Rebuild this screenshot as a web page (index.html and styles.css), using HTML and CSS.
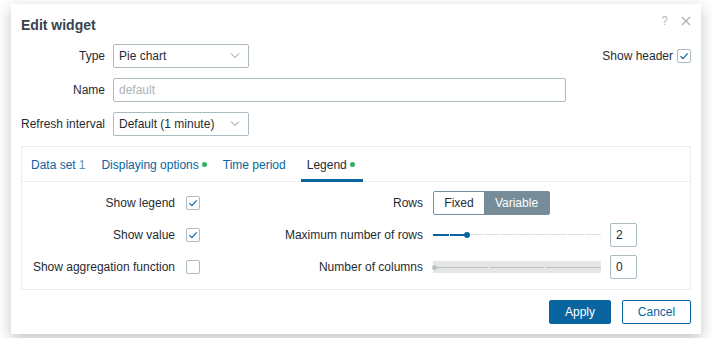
FILE: index.html
```html
<!DOCTYPE html>
<html lang="en">
<head>
    <meta charset="UTF-8">
    <title>Edit widget</title>
    <link rel="stylesheet" href="styles.css">
</head>
<body>
    <div class="dialog">
        <div class="dialog-header">
            <h4>Edit widget</h4>
            <div class="header-controls">
                <span class="btn-help">?</span>
                <span class="btn-close">
                    <svg width="10" height="10" viewBox="0 0 10 10"><path d="M1 1l8 8M9 1l-8 8" stroke="#a9b3b9" stroke-width="1.4" fill="none"/></svg>
                </span>
            </div>
        </div>

        <div class="widget-form">
            <label class="form-label">Type</label>
            <div class="form-field">
                <div class="select">
                    <span>Pie chart</span>
                    <svg width="10" height="6" viewBox="0 0 10 6"><path d="M1 0.5l4 4 4-4" stroke="#85939b" stroke-width="1" fill="none"/></svg>
                </div>
            </div>
            <div class="show-header">
                <span>Show header</span>
                <span class="checkbox">
                    <svg width="12" height="12" viewBox="0 0 12 12"><path d="M2.5 6.2l2.4 2.4 4.8-5.2" stroke="#0a64a0" stroke-width="1.2" fill="none"/></svg>
                </span>
            </div>

            <label class="form-label">Name</label>
            <div class="form-field">
                <input type="text" class="name-input" placeholder="default">
            </div>
            <div></div>

            <label class="form-label">Refresh interval</label>
            <div class="form-field">
                <div class="select">
                    <span>Default (1 minute)</span>
                    <svg width="10" height="6" viewBox="0 0 10 6"><path d="M1 0.5l4 4 4-4" stroke="#85939b" stroke-width="1" fill="none"/></svg>
                </div>
            </div>
            <div></div>
        </div>

        <div class="tabs">
            <ul class="tab-list">
                <li class="tab">Data set <span class="tab-count">1</span></li>
                <li class="tab">Displaying options<span class="dot"></span></li>
                <li class="tab">Time period</li>
                <li class="tab active">Legend<span class="dot"></span></li>
            </ul>
            <div class="tab-panel">
                <div class="legend-grid">
                    <label class="grid-label">Show legend</label>
                    <div class="grid-check"><span class="checkbox">
                        <svg width="12" height="12" viewBox="0 0 12 12"><path d="M2.5 6.2l2.4 2.4 4.8-5.2" stroke="#0a64a0" stroke-width="1.2" fill="none"/></svg>
                    </span></div>
                    <label class="grid-label right">Rows</label>
                    <div class="grid-control">
                        <div class="segmented">
                            <span class="seg">Fixed</span>
                            <span class="seg selected">Variable</span>
                        </div>
                    </div>

                    <label class="grid-label">Show value</label>
                    <div class="grid-check"><span class="checkbox">
                        <svg width="12" height="12" viewBox="0 0 12 12"><path d="M2.5 6.2l2.4 2.4 4.8-5.2" stroke="#0a64a0" stroke-width="1.2" fill="none"/></svg>
                    </span></div>
                    <label class="grid-label right">Maximum number of rows</label>
                    <div class="grid-control">
                        <div class="range">
                            <div class="range-track">
                                <span class="step filled"></span><span class="step filled"></span>
                                <span class="step"></span><span class="step"></span><span class="step"></span>
                                <span class="step"></span><span class="step"></span><span class="step"></span>
                                <span class="step"></span><span class="step"></span>
                            </div>
                            <span class="thumb" style="left: 34px"></span>
                        </div>
                        <input type="text" class="num-input" value="2">
                    </div>

                    <label class="grid-label">Show aggregation function</label>
                    <div class="grid-check"><span class="checkbox"></span></div>
                    <label class="grid-label right">Number of columns</label>
                    <div class="grid-control">
                        <div class="range disabled">
                            <div class="range-track">
                                <span class="step"></span><span class="step"></span><span class="step"></span>
                            </div>
                            <span class="thumb" style="left: 2px"></span>
                        </div>
                        <input type="text" class="num-input" value="0">
                    </div>
                </div>
            </div>
        </div>

        <div class="dialog-footer">
            <button class="btn-apply">Apply</button>
            <button class="btn-cancel">Cancel</button>
        </div>
    </div>
</body>
</html>
```

FILE: styles.css
```css
:root {
    --text-color: #1f2c33;
    --link-color: #0a64a0;
    --border-color: #acbbc2;
    --light-border: #ebeef0;
    --green: #34af67;
}

body {
    font-family: 'Liberation Sans', Arial, sans-serif;
    font-size: 12px;
    color: var(--text-color);
    margin: 0;
    padding: 4px 11px;
    background-color: #fff;
}

.dialog {
    width: 690px;
    box-sizing: border-box;
    padding: 0 10px 10px;
    background: white;
    box-shadow: 0 5px 14px rgba(40, 60, 75, 0.3);
}

.dialog-header {
    display: flex;
    justify-content: space-between;
    align-items: center;
    padding: 11px 0 9px;
}

.dialog-header h4 {
    margin: 0;
    font-size: 14px;
    line-height: 20px;
    font-weight: bold;
    color: #36444e;
}

.header-controls {
    display: flex;
    align-items: center;
    gap: 13px;
    margin-top: -8px;
}

.btn-help {
    color: #b3bcc1;
    font-size: 12px;
}

.btn-close {
    display: flex;
}

/* Основная форма */
.widget-form {
    display: grid;
    grid-template-columns: 84px 1fr auto;
    column-gap: 8px;
    row-gap: 10px;
    align-items: center;
}

.form-label {
    text-align: right;
    white-space: nowrap;
}

.select {
    width: 136px;
    height: 24px;
    box-sizing: border-box;
    border: 1px solid var(--border-color);
    border-radius: 2px;
    display: flex;
    align-items: center;
    justify-content: space-between;
    padding: 0 8px 0 5px;
}

.name-input {
    width: 453px;
    height: 24px;
    box-sizing: border-box;
    border: 1px solid var(--border-color);
    border-radius: 2px;
    padding: 0 5px;
    font-family: inherit;
    font-size: 12px;
    color: var(--text-color);
    display: block;
}

.name-input::placeholder {
    color: #a9b3b9;
}

.show-header {
    display: flex;
    align-items: center;
    gap: 4px;
}

.checkbox {
    width: 14px;
    height: 14px;
    box-sizing: border-box;
    border: 1px solid var(--border-color);
    border-radius: 2px;
    display: flex;
    align-items: center;
    justify-content: center;
    background: white;
}

/* Вкладки */
.tabs {
    margin-top: 10px;
    border: 1px solid var(--light-border);
}

.tab-list {
    list-style: none;
    margin: 0;
    padding: 0 0 0 3px;
    display: flex;
    border-bottom: 1px solid var(--light-border);
}

.tab {
    height: 35px;
    box-sizing: border-box;
    padding: 3px 6px 0;
    margin-right: 4px;
    margin-bottom: -1px;
    display: flex;
    align-items: center;
    color: var(--link-color);
    border-bottom: 3px solid transparent;
}

.tab-count {
    color: #6b8ea8;
    margin-left: 3px;
}

.tab.active {
    margin-left: 5px;
    padding-right: 8px;
    color: var(--text-color);
    border-bottom-color: var(--link-color);
}

.dot {
    width: 5px;
    height: 5px;
    border-radius: 50%;
    background: var(--green);
    margin-left: 3px;
}

.tab-panel {
    padding: 9px 0 10px 10px;
}

.legend-grid {
    display: grid;
    grid-template-columns: 143px 25px 233px auto;
    grid-auto-rows: 24px;
    row-gap: 8px;
    align-items: center;
}

.grid-label {
    text-align: right;
    white-space: nowrap;
}

.grid-label.right {
    padding-right: 10px;
}

.grid-check {
    display: flex;
    justify-content: flex-end;
}

.grid-control {
    display: flex;
    align-items: center;
    gap: 9px;
}

.segmented {
    display: flex;
    height: 24px;
    box-sizing: border-box;
    border: 1px solid #768d99;
    border-radius: 2px;
}

.seg {
    display: flex;
    align-items: center;
    justify-content: center;
    box-sizing: border-box;
}

.seg:first-child {
    width: 50px;
}

.seg.selected {
    width: 65px;
    background: #768d99;
    color: white;
}

/* Ползунок */
.range {
    position: relative;
    width: 168px;
    height: 12px;
    display: flex;
    align-items: center;
}

.range-track {
    width: 100%;
    display: flex;
    gap: 1px;
}

.step {
    flex: 1;
    height: 1px;
    background: #dce2e5;
}

.step.filled {
    height: 2px;
    background: var(--link-color);
}

.thumb {
    position: absolute;
    top: 3px;
    width: 6px;
    height: 6px;
    margin-left: -3px;
    border-radius: 50%;
    background: var(--link-color);
}

.range.disabled {
    background: #e6e6e6;
}

.range.disabled .range-track {
    gap: 2px;
}

.range.disabled .step {
    height: 1px;
    background: #b9c1c5;
}

.range.disabled .thumb {
    background: #bcc3c7;
    width: 5px;
    height: 5px;
    top: 3.5px;
}

.num-input {
    width: 27px;
    height: 24px;
    box-sizing: border-box;
    border: 1px solid var(--border-color);
    border-radius: 2px;
    padding: 0 5px;
    font-family: inherit;
    font-size: 12px;
    color: var(--text-color);
}

/* Кнопки */
.dialog-footer {
    display: flex;
    justify-content: flex-end;
    gap: 11px;
    margin-top: 10px;
}

.dialog-footer button {
    height: 24px;
    border-radius: 2px;
    font-family: inherit;
    font-size: 12px;
    cursor: pointer;
}

.btn-apply {
    width: 62px;
    background-color: var(--link-color);
    border: 1px solid var(--link-color);
    color: white;
}

.btn-cancel {
    width: 69px;
    background: white;
    border: 1px solid var(--link-color);
    color: var(--link-color);
}
```
